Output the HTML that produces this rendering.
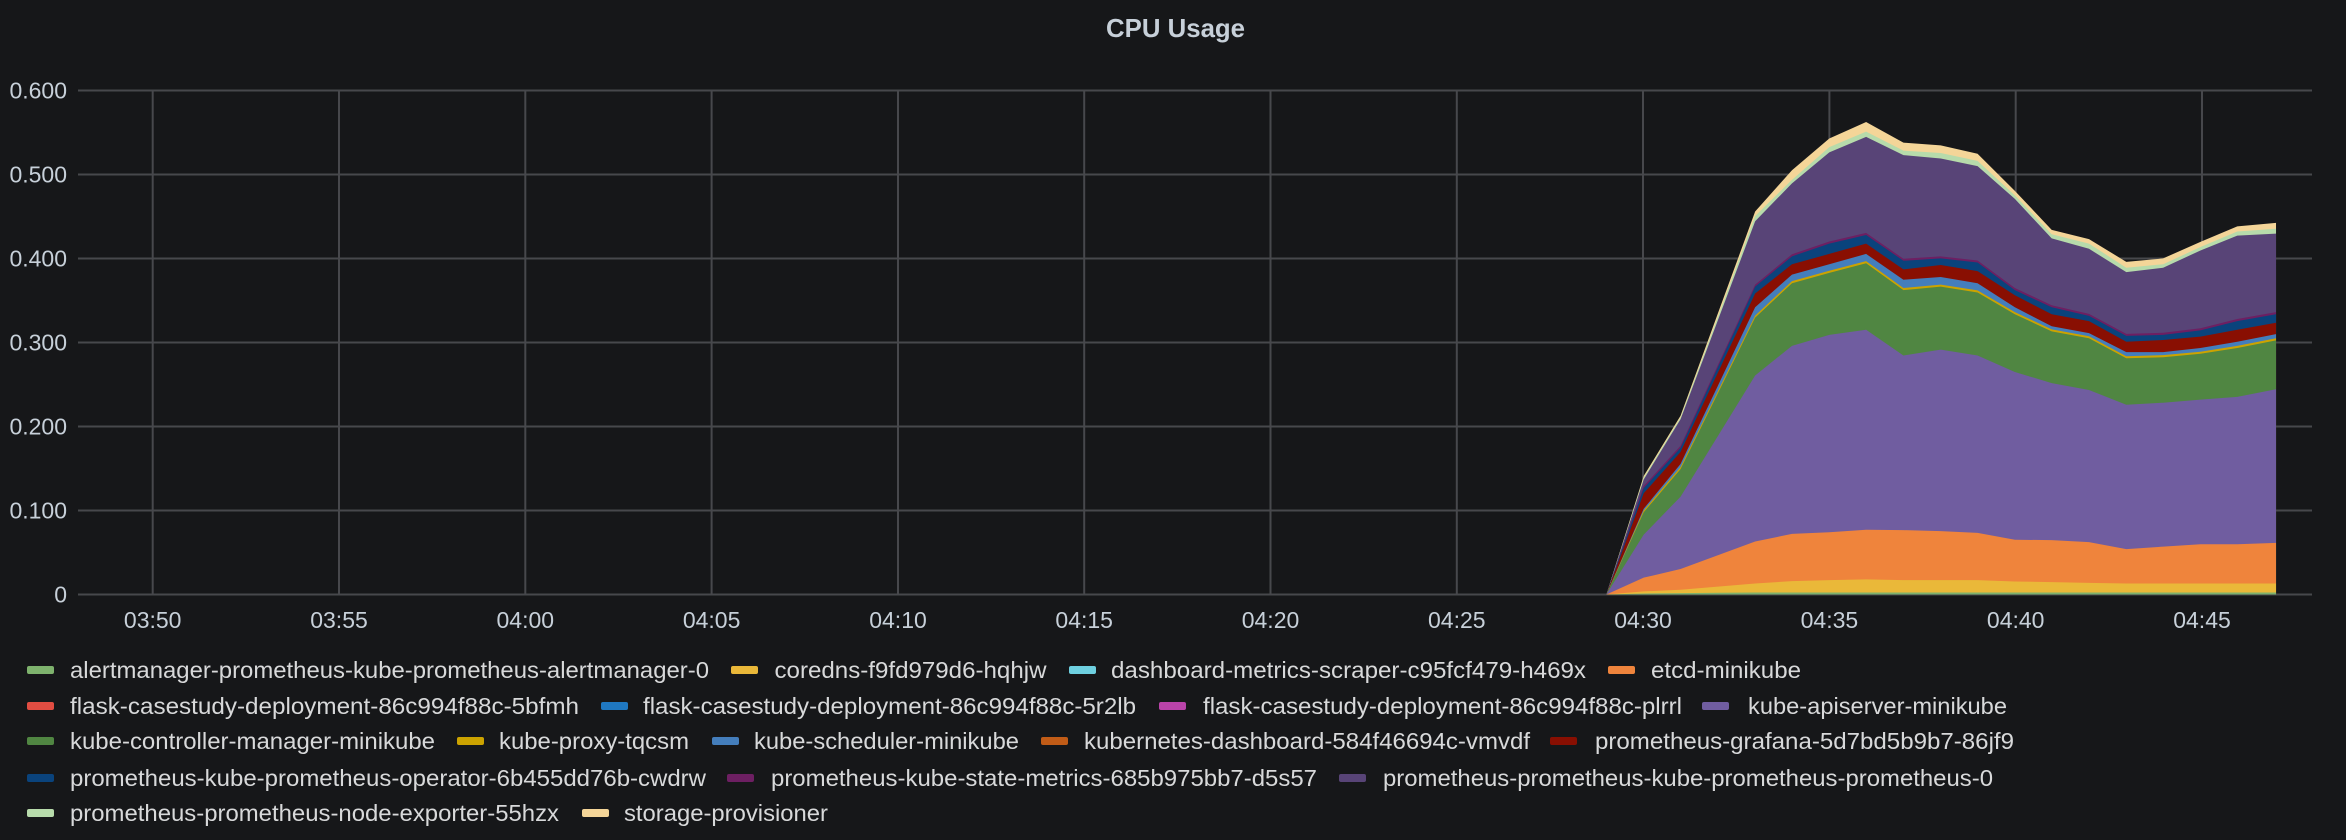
<!DOCTYPE html>
<html><head><meta charset="utf-8">
<style>
html,body{margin:0;padding:0;background:#161719;}
body{width:2346px;height:840px;position:relative;overflow:hidden;font-family:"Liberation Sans",Arial,sans-serif;color:#c7d0d9;}
</style></head><body>
<svg width="2346" height="840" style="position:absolute;left:0;top:0">
<g stroke="#47484c" stroke-width="2" fill="none">
<line x1="78" y1="90.5" x2="2312" y2="90.5"/>
<line x1="78" y1="174.5" x2="2312" y2="174.5"/>
<line x1="78" y1="258.5" x2="2312" y2="258.5"/>
<line x1="78" y1="342.5" x2="2312" y2="342.5"/>
<line x1="78" y1="426.5" x2="2312" y2="426.5"/>
<line x1="78" y1="510.5" x2="2312" y2="510.5"/>
<line x1="78" y1="594.5" x2="2312" y2="594.5"/>
<line x1="152.7" y1="90" x2="152.7" y2="595"/>
<line x1="339" y1="90" x2="339" y2="595"/>
<line x1="525.3" y1="90" x2="525.3" y2="595"/>
<line x1="711.6" y1="90" x2="711.6" y2="595"/>
<line x1="898" y1="90" x2="898" y2="595"/>
<line x1="1084.2" y1="90" x2="1084.2" y2="595"/>
<line x1="1270.5" y1="90" x2="1270.5" y2="595"/>
<line x1="1456.8" y1="90" x2="1456.8" y2="595"/>
<line x1="1643" y1="90" x2="1643" y2="595"/>
<line x1="1829.4" y1="90" x2="1829.4" y2="595"/>
<line x1="2015.7" y1="90" x2="2015.7" y2="595"/>
<line x1="2202" y1="90" x2="2202" y2="595"/>
</g>
<g transform="translate(1560,80) scale(0.4783,0.3444)">
<polygon fill="#f4d598" points="97,1494 175,1150 252,975 330,678 408,382 485,262 563,170 640,122 718,182 796,190 873,214 951,322 1028,435 1106,462 1184,528 1261,518 1339,470 1416,425 1497,415 1497,1494"/>
<polygon fill="#b7dbab" points="97,1494 175,1155 252,980 330,688 408,395 485,290 563,195 640,150 718,205 796,212 873,235 951,335 1028,448 1106,475 1184,545 1261,535 1339,485 1416,440 1497,432 1497,1494"/>
<polygon fill="#584477" points="97,1494 175,1160 252,985 330,698 408,410 485,300 563,210 640,165 718,218 796,228 873,250 951,345 1028,460 1106,490 1184,558 1261,545 1339,495 1416,452 1497,446 1497,1494"/>
<polygon fill="#6d1f62" points="97,1494 175,1179 252,1062 330,828 408,594 485,506 563,469 640,444 718,519 796,512 873,524 951,604 1028,654 1106,679 1184,737 1261,734 1339,721 1416,694 1497,674 1497,1494"/>
<polygon fill="#0a437c" points="97,1494 175,1185 252,1068 330,834 408,600 485,512 563,475 640,450 718,525 796,518 873,530 951,610 1028,660 1106,685 1184,743 1261,740 1339,727 1416,700 1497,680 1497,1494"/>
<polygon fill="#890f02" points="97,1494 175,1200 252,1080 330,850 408,620 485,535 563,505 640,475 718,550 796,537 873,555 951,625 1028,680 1106,700 1184,760 1261,755 1339,745 1416,725 1497,705 1497,1494"/>
<polygon fill="#447ebc" points="97,1494 175,1245 252,1115 330,888 408,660 485,565 563,535 640,505 718,580 796,572 873,590 951,660 1028,715 1106,735 1184,790 1261,790 1339,778 1416,760 1497,738 1497,1494"/>
<polygon fill="#cca300" points="97,1494 175,1250 252,1124 330,904 408,684 485,584 563,554 640,526 718,604 796,594 873,611 951,674 1028,724 1106,744 1184,802 1261,799 1339,789 1416,772 1497,750 1497,1494"/>
<polygon fill="#508642" points="97,1494 175,1255 252,1130 330,910 408,690 485,590 563,560 640,532 718,610 796,600 873,617 951,680 1028,730 1106,750 1184,808 1261,805 1339,795 1416,778 1497,756 1497,1494"/>
<polygon fill="#705da0" points="97,1494 175,1320 252,1210 330,1034 408,858 485,772 563,740 640,725 718,800 796,783 873,800 951,848 1028,880 1106,900 1184,943 1261,937 1339,928 1416,920 1497,898 1497,1494"/>
<polygon fill="#ef843c" points="97,1494 175,1445 252,1420 330,1380 408,1340 485,1318 563,1313 640,1306 718,1307 796,1310 873,1315 951,1335 1028,1336 1106,1342 1184,1362 1261,1355 1339,1348 1416,1348 1497,1344 1497,1494"/>
<polygon fill="#eab839" points="97,1494 175,1485 252,1480 330,1471 408,1462 485,1455 563,1452 640,1450 718,1452 796,1452 873,1452 951,1456 1028,1458 1106,1460 1184,1462 1261,1462 1339,1462 1416,1462 1497,1462 1497,1494"/>
<polygon fill="#7eb26d" points="97,1494 175,1491 252,1490 330,1489 408,1488 485,1488 563,1488 640,1488 718,1488 796,1488 873,1488 951,1488 1028,1488 1106,1488 1184,1488 1261,1488 1339,1488 1416,1488 1497,1488 1497,1494"/>
</g>
<text x="1106" y="37" textLength="139" lengthAdjust="spacingAndGlyphs" font-family="Liberation Sans, Arial, sans-serif" font-weight="bold" font-size="26" fill="#c7d0d9">CPU Usage</text>
<g font-family="Liberation Sans, Arial, sans-serif" font-size="23" fill="#c7d0d9" text-anchor="end">
<text x="67" y="98.5">0.600</text>
<text x="67" y="182.5">0.500</text>
<text x="67" y="266.5">0.400</text>
<text x="67" y="350.5">0.300</text>
<text x="67" y="434.5">0.200</text>
<text x="67" y="518.5">0.100</text>
<text x="67" y="602.5">0</text>
</g>
<g font-family="Liberation Sans, Arial, sans-serif" font-size="23" fill="#c7d0d9" text-anchor="middle">
<text x="152.7" y="628">03:50</text>
<text x="339" y="628">03:55</text>
<text x="525.3" y="628">04:00</text>
<text x="711.6" y="628">04:05</text>
<text x="898" y="628">04:10</text>
<text x="1084.2" y="628">04:15</text>
<text x="1270.5" y="628">04:20</text>
<text x="1456.8" y="628">04:25</text>
<text x="1643" y="628">04:30</text>
<text x="1829.4" y="628">04:35</text>
<text x="2015.7" y="628">04:40</text>
<text x="2202" y="628">04:45</text>
</g>
<g>
<rect x="27" y="666" width="27" height="8" rx="2" fill="#7eb26d"/>
<rect x="731" y="666" width="27" height="8" rx="2" fill="#eab839"/>
<rect x="1069" y="666" width="27" height="8" rx="2" fill="#6ed0e0"/>
<rect x="1608" y="666" width="27" height="8" rx="2" fill="#ef843c"/>
<rect x="27" y="702" width="27" height="8" rx="2" fill="#e24d42"/>
<rect x="601" y="702" width="27" height="8" rx="2" fill="#1f78c1"/>
<rect x="1159" y="702" width="27" height="8" rx="2" fill="#ba43a9"/>
<rect x="1702" y="702" width="27" height="8" rx="2" fill="#705da0"/>
<rect x="27" y="737" width="27" height="8" rx="2" fill="#508642"/>
<rect x="457" y="737" width="27" height="8" rx="2" fill="#cca300"/>
<rect x="712" y="737" width="27" height="8" rx="2" fill="#447ebc"/>
<rect x="1041" y="737" width="27" height="8" rx="2" fill="#c15c17"/>
<rect x="1550" y="737" width="27" height="8" rx="2" fill="#890f02"/>
<rect x="27" y="774" width="27" height="8" rx="2" fill="#0a437c"/>
<rect x="727" y="774" width="27" height="8" rx="2" fill="#6d1f62"/>
<rect x="1339" y="774" width="27" height="8" rx="2" fill="#584477"/>
<rect x="27" y="809" width="27" height="8" rx="2" fill="#b7dbab"/>
<rect x="582" y="809" width="27" height="8" rx="2" fill="#f4d598"/>
</g>
<g font-family="Liberation Sans, Arial, sans-serif" font-size="23" fill="#d8d9da" lengthAdjust="spacingAndGlyphs">
<text x="70" y="678" textLength="639" lengthAdjust="spacingAndGlyphs">alertmanager-prometheus-kube-prometheus-alertmanager-0</text>
<text x="774.5" y="678" textLength="272" lengthAdjust="spacingAndGlyphs">coredns-f9fd979d6-hqhjw</text>
<text x="1111" y="678" textLength="475" lengthAdjust="spacingAndGlyphs">dashboard-metrics-scraper-c95fcf479-h469x</text>
<text x="1651" y="678" textLength="150" lengthAdjust="spacingAndGlyphs">etcd-minikube</text>
<text x="70" y="714" textLength="509" lengthAdjust="spacingAndGlyphs">flask-casestudy-deployment-86c994f88c-5bfmh</text>
<text x="643" y="714" textLength="493" lengthAdjust="spacingAndGlyphs">flask-casestudy-deployment-86c994f88c-5r2lb</text>
<text x="1203" y="714" textLength="479" lengthAdjust="spacingAndGlyphs">flask-casestudy-deployment-86c994f88c-plrrl</text>
<text x="1748" y="714" textLength="259" lengthAdjust="spacingAndGlyphs">kube-apiserver-minikube</text>
<text x="70" y="749" textLength="365" lengthAdjust="spacingAndGlyphs">kube-controller-manager-minikube</text>
<text x="499" y="749" textLength="190" lengthAdjust="spacingAndGlyphs">kube-proxy-tqcsm</text>
<text x="754" y="749" textLength="265" lengthAdjust="spacingAndGlyphs">kube-scheduler-minikube</text>
<text x="1084" y="749" textLength="446" lengthAdjust="spacingAndGlyphs">kubernetes-dashboard-584f46694c-vmvdf</text>
<text x="1595" y="749" textLength="419" lengthAdjust="spacingAndGlyphs">prometheus-grafana-5d7bd5b9b7-86jf9</text>
<text x="70" y="786" textLength="636" lengthAdjust="spacingAndGlyphs">prometheus-kube-prometheus-operator-6b455dd76b-cwdrw</text>
<text x="771" y="786" textLength="546" lengthAdjust="spacingAndGlyphs">prometheus-kube-state-metrics-685b975bb7-d5s57</text>
<text x="1383" y="786" textLength="610" lengthAdjust="spacingAndGlyphs">prometheus-prometheus-kube-prometheus-prometheus-0</text>
<text x="70" y="821" textLength="489" lengthAdjust="spacingAndGlyphs">prometheus-prometheus-node-exporter-55hzx</text>
<text x="624" y="821" textLength="204" lengthAdjust="spacingAndGlyphs">storage-provisioner</text>
</g>
</svg>
</body></html>
